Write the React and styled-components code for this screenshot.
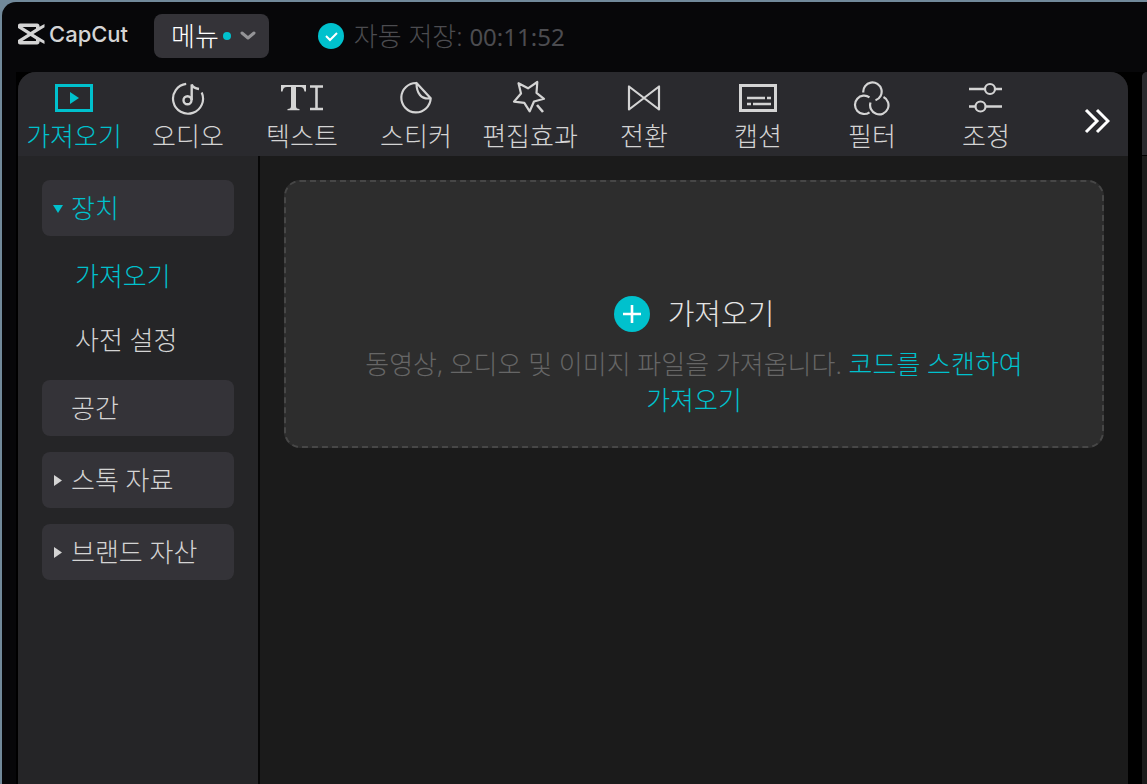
import React from "react";
import styled, { createGlobalStyle, css } from "styled-components";

const color = {
  desktop: "#71899a",
  frame: "#070709",
  bar: "#2a2a2e",
  side: "#252527",
  body: "#1b1b1b",
  drop: "#2d2d2d",
  button: "#343338",
  accent: "#00c1cd",
  text: "#d4d4d4",
  muted: "#666666",
};

const Global = createGlobalStyle`
  *, *::before, *::after { box-sizing: border-box; }
  html { background: ${color.desktop}; }
  body {
    margin: 0;
    background: ${color.desktop};
    color: ${color.text};
    font: 300 26px/32px "Noto Sans", "Noto Sans CJK KR", sans-serif;
  }
  svg { display: block; flex: none; }
`;

const ButtonBase = styled.button`
  font: inherit;
  color: inherit;
  border: 0;
  background: none;
  padding: 0;
  cursor: pointer;
`;

const Window = styled.div`
  min-height: 100vh;
  padding: 2px 0 0 2px;
  display: flex;
`;

const Frame = styled.div`
  flex: 1;
  min-width: 0;
  display: flex;
  flex-direction: column;
  background: ${color.frame};
  border-top-left-radius: 14px;
`;

const Header = styled.header`
  height: 70px;
  display: flex;
  align-items: center;
  padding: 0 16px 2px;
`;

const Brand = styled.div`
  display: flex;
  align-items: center;
  gap: 4px;
  width: 136px;
  padding-bottom: 4px;
  font: 500 22px/28px Inter, sans-serif;
`;

const MenuButton = styled(ButtonBase)`
  display: flex;
  align-items: center;
  height: 44px;
  padding: 0 12px 0 17px;
  border-radius: 8px;
  background: ${color.button};
  color: #fff;
`;

const Dot = styled.span`
  width: 8px;
  height: 8px;
  margin: 0 8px 0 4px;
  border-radius: 50%;
  background: ${color.accent};
`;

const AutoSave = styled.div`
  display: flex;
  align-items: center;
  gap: 10px;
  margin-left: 49px;
  color: #4c4c50;
`;

const Time = styled.time`
  font-size: 24px;
  font-weight: 400;
`;

const Panels = styled.div`
  flex: 1;
  display: flex;
  gap: 14px;
  margin-left: 14px;
  padding-left: 2px;
  background: #000;
`;

const Panel = styled.main`
  flex: 1;
  min-width: 0;
  display: flex;
  flex-direction: column;
  overflow: hidden;
  border-radius: 18px 18px 0 0;
  background: ${color.body};
`;

const NextPanel = styled.aside`
  flex: 0 0 5px;
  border-top-left-radius: 16px;
  background: ${color.body};
  overflow: hidden;
`;

const NextBar = styled.div`
  height: 84px;
  background: ${color.bar};
  border-bottom: 1px solid #000;
`;

const Toolbar = styled.nav`
  display: flex;
  height: 84px;
  background: ${color.bar};
`;

const Tabs = styled.div`
  display: flex;
  flex: 1;
  min-width: 0;
  margin-left: -1px;
`;

const Tab = styled(ButtonBase)`
  flex: 0 0 114px;
  display: flex;
  flex-direction: column;
  align-items: center;
  gap: 4px;
  padding-top: 8px;
  color: ${(p) => (p.$active ? color.accent : color.text)};
  white-space: nowrap;
`;

const More = styled(ButtonBase)`
  width: 62px;
  padding-top: 14px;
  display: grid;
  place-items: center;
  color: #fff;
`;

const Body = styled.div`
  flex: 1;
  display: flex;
`;

const Sidebar = styled.nav`
  flex: 0 0 242px;
  padding: 24px;
  background: ${color.side};
  border-right: 2px solid #070707;
  display: flex;
  flex-direction: column;
  gap: 16px;
`;

const Group = styled.div`
  display: flex;
  flex-direction: column;
`;

const sideText = css`
  text-align: left;
  color: ${(p) => (p.$active ? color.accent : color.text)};
`;

const SideButton = styled(ButtonBase)`
  height: 56px;
  display: flex;
  align-items: center;
  gap: 7px;
  padding-left: 10px;
  border-radius: 8px;
  background: ${color.button};
  ${sideText}
`;

const SubList = styled.div`
  display: flex;
  flex-direction: column;
  padding-top: 8px;
  margin-bottom: -8px;
`;

const SubItem = styled(ButtonBase)`
  height: 64px;
  padding-left: 33px;
  ${sideText}
`;

const Content = styled.section`
  flex: 1;
  min-width: 0;
  padding: 24px;
`;

const DropZone = styled.div`
  display: flex;
  flex-direction: column;
  align-items: center;
  gap: 14px;
  padding: 114px 40px 28px;
  border: 2px dashed #474747;
  border-radius: 16px;
  background: ${color.drop};
`;

const ImportButton = styled(ButtonBase)`
  display: flex;
  align-items: center;
  gap: 18px;
  height: 36px;
  font-size: 29px;
  color: #e4e4e4;
`;

const Hint = styled.p`
  margin: 0;
  line-height: 36px;
  text-align: center;
  word-break: keep-all;
  color: ${color.muted};
`;

const ScanLink = styled.a`
  color: ${color.accent};
  text-decoration: none;
`;

function Icon({ children, w = 40, h = 36, ...rest }) {
  return (
    <svg width={w} height={h} viewBox={`0 0 ${w} ${h}`} fill="none" stroke="currentColor" strokeWidth="2" aria-hidden="true" {...rest}>
      {children}
    </svg>
  );
}

const icons = {
  media: (
    <Icon>
      <rect x="2.5" y="5.5" width="35" height="25" strokeWidth="3" />
      <path d="M16 12v12l9-6z" fill="currentColor" stroke="none" />
    </Icon>
  ),
  audio: (
    <Icon>
      <path d="M18.200 3.800A15 15 0 1 0 33.700 12.500" strokeWidth="2.200" />
      <circle cx="19.500" cy="20.200" r="4" strokeWidth="2.400" />
      <path d="M23.700 20V4.500C25 7.500 27.500 8.500 31 9" strokeWidth="2.400" />
    </Icon>
  ),
  text: (
    <Icon w={44}>
      <path d="M1 5h25v6.500h-1.500c-.6-3.200-1.700-4.500-4.500-4.500h-4v19c0 2.200.8 2.800 3.500 3v1.200h-12V29c2.700-.2 3.500-.8 3.500-3V7H7c-2.800 0-3.900 1.300-4.500 4.500H1z" fill="currentColor" stroke="none" />
      <path d="M30 6.500h13M36.500 6.500v22.500M30 29h13" strokeWidth="2.600" />
    </Icon>
  ),
  sticker: (
    <Icon>
      <path d="M20.500 3A14.700 14.700 0 1 0 34.700 18.300L20.500 3C20.500 13 25 19.800 34.700 18.300" strokeWidth="2.200" strokeLinejoin="round" />
    </Icon>
  ),
  effects: (
    <Icon>
      <path d="M8.500 3.200 18 8.300 27.300 2 26.500 12.800 34 18.800 24 21.500 19.700 31.300 14.300 22.800 4 21.700 11 13.500z" strokeWidth="2.200" strokeLinejoin="round" />
      <path d="m27 25 6 7" strokeWidth="2.600" />
    </Icon>
  ),
  transition: (
    <Icon>
      <path d="M5 6.500v23l30-23v23z" strokeWidth="2.200" strokeLinejoin="round" />
    </Icon>
  ),
  captions: (
    <Icon>
      <rect x="2.500" y="5.500" width="35" height="25" strokeWidth="3" />
      <path d="M9 18h18m2 0h4M9 24h4m2 0h18" strokeWidth="2.400" />
    </Icon>
  ),
  filter: (
    <Icon>
      <path d="M11.300 12.500A9.200 9.200 0 1 1 23.500 20.300M17.500 17.300A9.200 9.200 0 1 0 17.500 32.300M31.500 17A9.200 9.200 0 1 1 18.500 22.500" strokeWidth="2.200" />
    </Icon>
  ),
  adjust: (
    <Icon>
      <path d="M3 9h16m10 0h7M3 26.500h6.500m10 0H36" strokeWidth="2.400" />
      <circle cx="24" cy="9" r="5" strokeWidth="2.200" />
      <circle cx="14.500" cy="26.500" r="5" strokeWidth="2.200" />
    </Icon>
  ),
};

const tabs = [
  ["media", "가져오기"],
  ["audio", "오디오"],
  ["text", "텍스트"],
  ["sticker", "스티커"],
  ["effects", "편집효과"],
  ["transition", "전환"],
  ["captions", "캡션"],
  ["filter", "필터"],
  ["adjust", "조정"],
];

function Arrow({ open, hidden }) {
  return (
    <Icon w={12} h={12} stroke="none">
      {!hidden && <path d={open ? "M1 3h10l-5 8z" : "M2 1v11l8-5.500z"} fill="currentColor" />}
    </Icon>
  );
}

export default function App() {
  return (
    <Window>
      <Global />
      <Frame>
        <Header>
          <Brand>
            <Icon w={27} h={22}>
              <path
                d="M2 .5h17c1.600 0 2.500.9 2.500 2.500v.8L26.500 1v3.200L15.500 11l11 6.800V21l-5-2.800v.8c0 1.600-.9 2.500-2.500 2.500H2c-1.200 0-2-.8-2-2V17l9.500-6L0 5V2.500C0 1.300.8.500 2 .500zM4.500 4l8 5L18 5.500V4zM4.500 18H18v-1.500L12.500 13z"
                fill="currentColor"
                fillRule="evenodd"
                stroke="none"
              />
            </Icon>
            CapCut
          </Brand>
          <MenuButton>
            메뉴
            <Dot />
            <Icon w={18} h={12} stroke="#949497" strokeWidth="3">
              <path d="m3 3 6 5 6-5" strokeLinecap="round" strokeLinejoin="round" />
            </Icon>
          </MenuButton>
          <AutoSave>
            <Icon w={26} h={26}>
              <circle cx="13" cy="13" r="13" fill={color.accent} stroke="none" />
              <path d="m8 13 4 4 7-7" stroke="#fff" />
            </Icon>
            <span>
              자동 저장: <Time>00:11:52</Time>
            </span>
          </AutoSave>
        </Header>
        <Panels>
          <Panel>
            <Toolbar>
              <Tabs>
                {tabs.map(([id, label]) => (
                  <Tab key={id} $active={id === "media"}>
                    {icons[id]}
                    {label}
                  </Tab>
                ))}
              </Tabs>
              <More aria-label="더 보기">
                <Icon w={26} h={26} strokeWidth="3">
                  <path d="M2 2l11 11L2 24M13 2l11 11-11 11" />
                </Icon>
              </More>
            </Toolbar>
            <Body>
              <Sidebar>
                <Group>
                  <SideButton $active>
                    <Arrow open />
                    장치
                  </SideButton>
                  <SubList>
                    <SubItem $active>가져오기</SubItem>
                    <SubItem>사전 설정</SubItem>
                  </SubList>
                </Group>
                <SideButton>
                  <Arrow hidden />
                  공간
                </SideButton>
                <SideButton>
                  <Arrow />
                  스톡 자료
                </SideButton>
                <SideButton>
                  <Arrow />
                  브랜드 자산
                </SideButton>
              </Sidebar>
              <Content>
                <DropZone>
                  <ImportButton>
                    <Icon w={36} h={36}>
                      <circle cx="18" cy="18" r="18" fill={color.accent} stroke="none" />
                      <path d="M9 18h18M18 9v18" stroke="#fff" strokeWidth="2.600" />
                    </Icon>
                    가져오기
                  </ImportButton>
                  <Hint>
                    동영상, 오디오 및 이미지 파일을 가져옵니다.{" "}
                    <ScanLink href="#scan">
                      <span>코드를 스캔하여</span> <span>가져오기</span>
                    </ScanLink>
                  </Hint>
                </DropZone>
              </Content>
            </Body>
          </Panel>
          <NextPanel>
            <NextBar />
          </NextPanel>
        </Panels>
      </Frame>
    </Window>
  );
}
